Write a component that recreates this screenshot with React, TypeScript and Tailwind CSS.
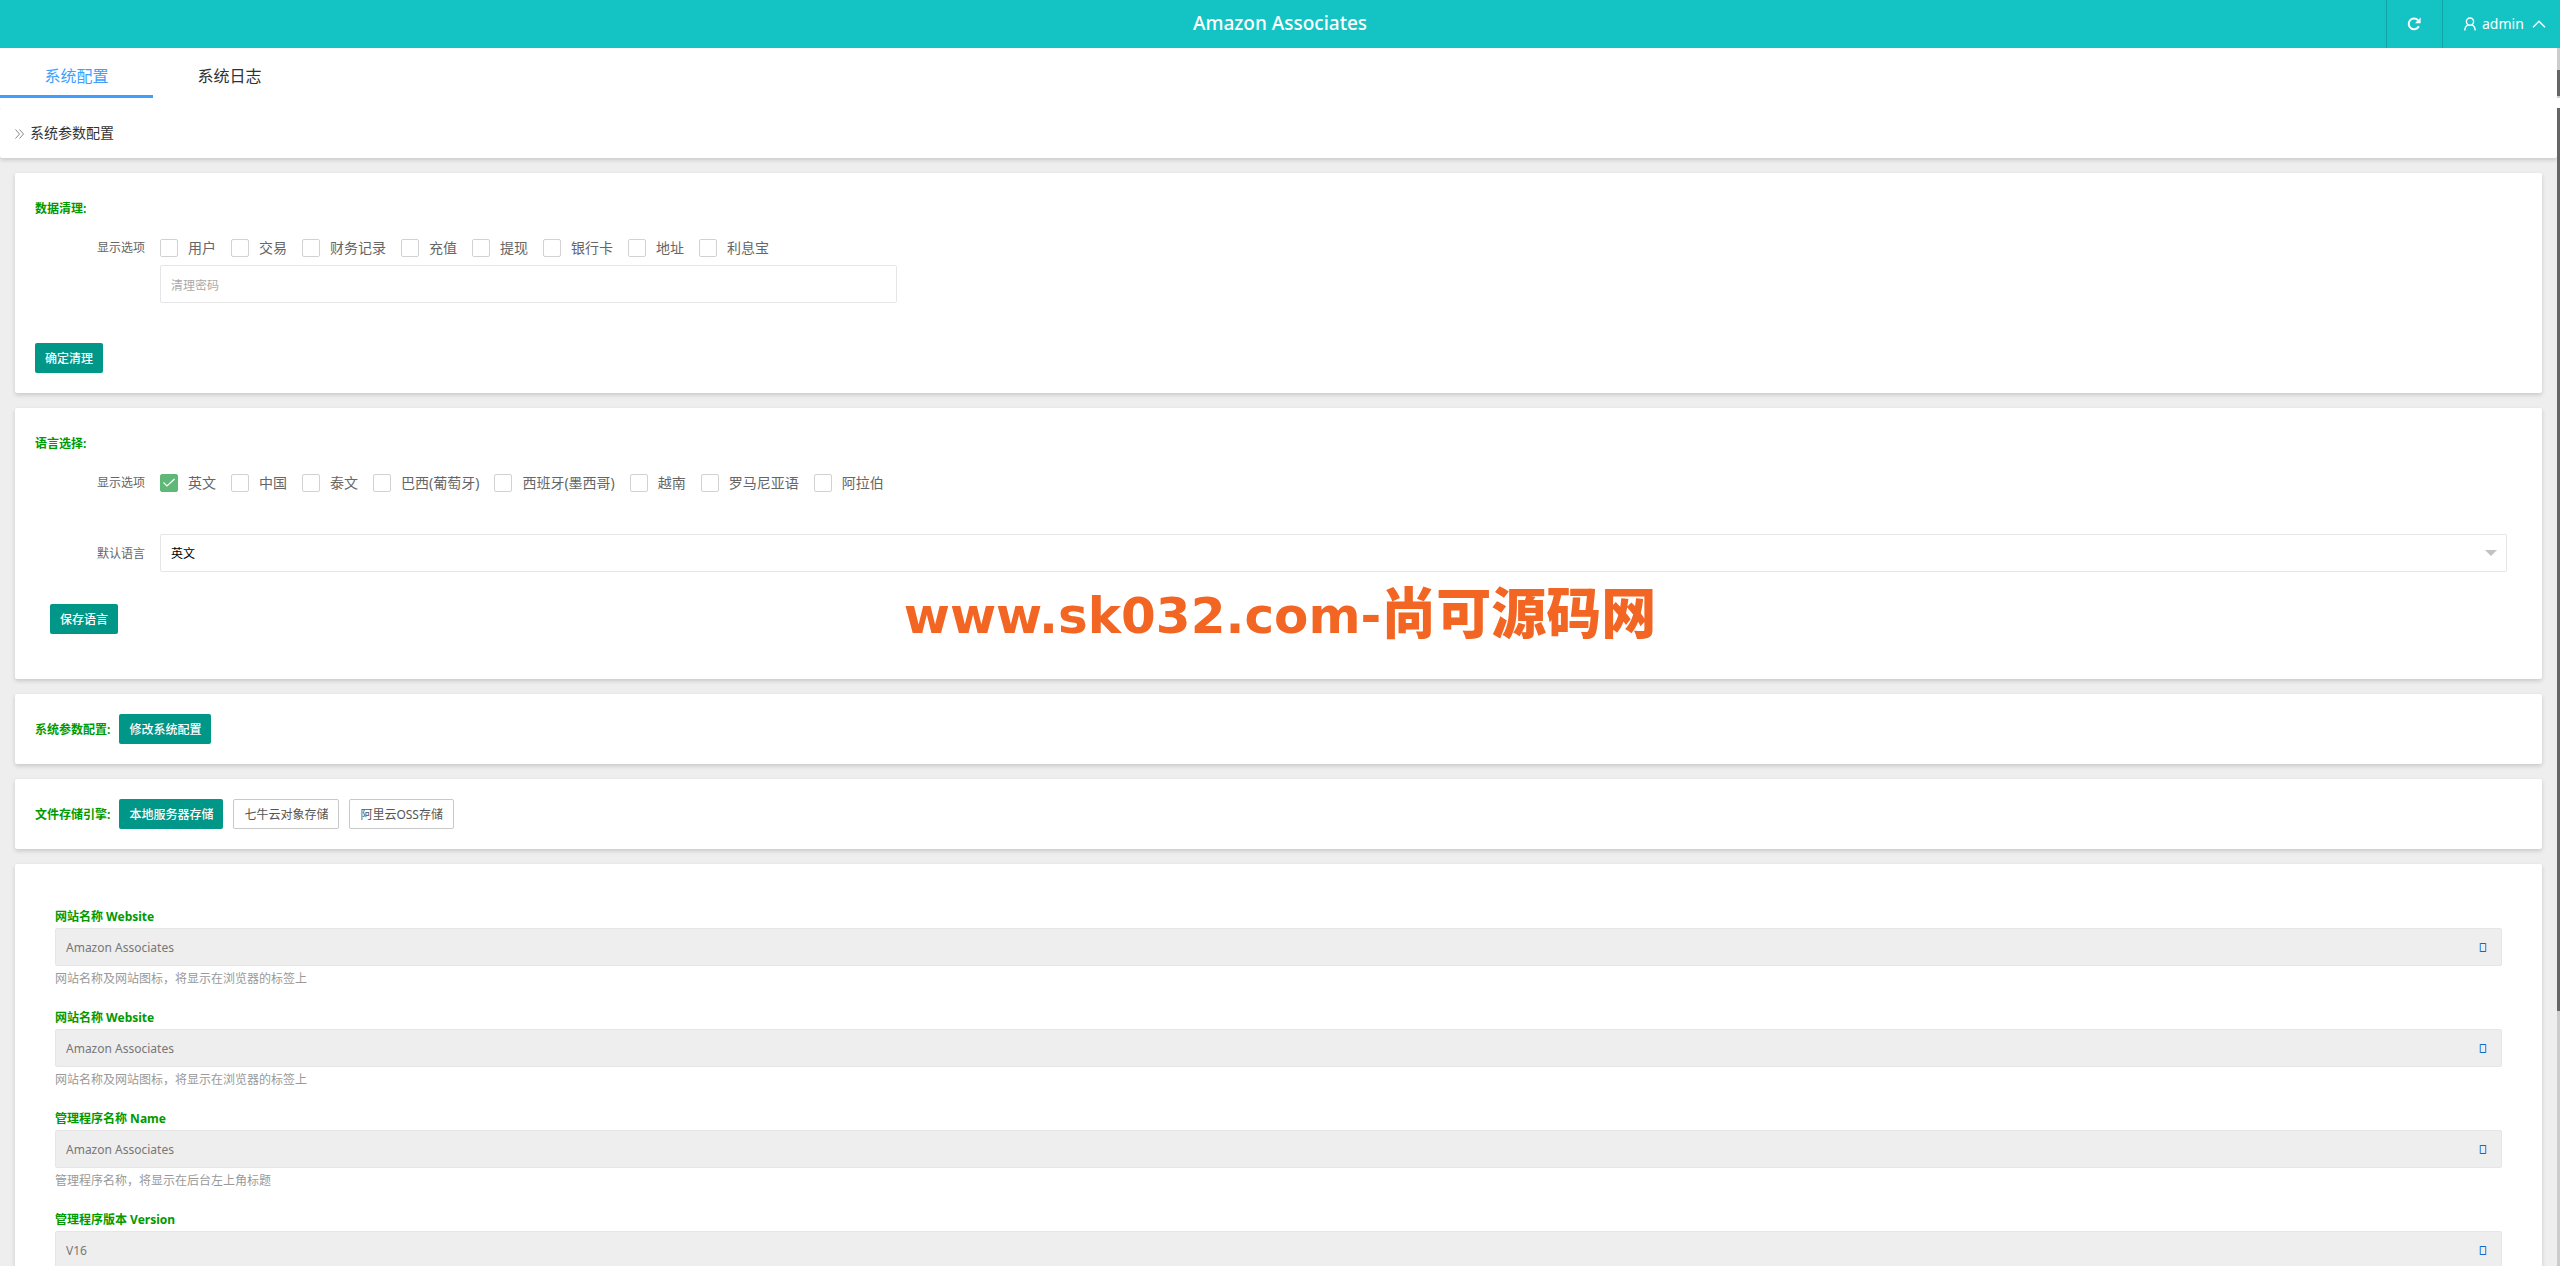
import { useId, useState } from "react";
import type { ReactNode } from "react";

const cleanupOptions = ["用户", "交易", "财务记录", "充值", "提现", "银行卡", "地址", "利息宝"];
const languages = ["英文", "中国", "泰文", "巴西(葡萄牙)", "西班牙(墨西哥)", "越南", "罗马尼亚语", "阿拉伯"];
const settings = [
  { label: "网站名称 Website", value: "Amazon Associates", hint: "网站名称及网站图标，将显示在浏览器的标签上" },
  { label: "网站名称 Website", value: "Amazon Associates", hint: "网站名称及网站图标，将显示在浏览器的标签上" },
  { label: "管理程序名称 Name", value: "Amazon Associates", hint: "管理程序名称，将显示在后台左上角标题" },
  { label: "管理程序版本 Version", value: "V16", hint: "" },
];

function Card({ children, className = "" }: { children: ReactNode; className?: string }) {
  return (
    <section className={`rounded-xs bg-white shadow-[0_2px_4px_rgba(0,0,0,0.16)] ${className}`}>{children}</section>
  );
}

function Title({ children }: { children: ReactNode }) {
  return <h2 className="pt-px text-xs leading-5 font-bold text-[#009900]">{children}</h2>;
}

function Button({ children, outline = false }: { children: ReactNode; outline?: boolean }) {
  return (
    <button
      type="button"
      className={`h-[30px] rounded-xs px-2.5 pt-0.5 text-xs whitespace-nowrap ${
        outline ? "border border-[#c9c9c9] bg-white text-[#555]" : "bg-[#009688] font-medium text-white"
      }`}
    >
      {children}
    </button>
  );
}

function Check({ label, initial = false }: { label: string; initial?: boolean }) {
  const [on, setOn] = useState(initial);
  return (
    <label className="flex items-center gap-2.5 text-sm leading-[18px] whitespace-nowrap text-[#666]">
      <span className="relative size-[18px]">
        <input
          type="checkbox"
          checked={on}
          onChange={() => setOn(!on)}
          className="block size-[18px] appearance-none rounded-xs border border-[#d2d2d2] bg-white checked:border-[#5fb878] checked:bg-[#5fb878]"
        />
        {on && (
          <svg viewBox="0 0 18 18" className="pointer-events-none absolute inset-0" fill="none" stroke="#fff" strokeWidth="1.2">
            <path d="M3.500 8.500 7 12l7.500-7" />
          </svg>
        )}
      </span>
      {label}
    </label>
  );
}

function CheckRow({ items, checked }: { items: string[]; checked?: string }) {
  return (
    <div className="mt-5 flex items-center" role="group" aria-label="显示选项">
      <span className="w-[125px] shrink-0 pr-[15px] text-right text-xs leading-[18px] text-[#666]">显示选项</span>
      <div className="flex flex-wrap gap-x-[15px] gap-y-2">
        {items.map((item) => (
          <Check key={item} label={item} initial={item === checked} />
        ))}
      </div>
    </div>
  );
}

function Setting({ label, value, hint }: { label: string; value: string; hint: string }) {
  const id = useId();
  return (
    <div className="flex h-[101px] flex-col">
      <label htmlFor={id} className="text-xs leading-[22px] font-bold text-[#009900]">
        {label}
      </label>
      <div className="flex h-[38px] shrink-0 items-center rounded-xs border border-[#e6e6e6] bg-[#eee] pr-[15px] pl-2.5">
        <input id={id} readOnly defaultValue={value} className="min-w-0 flex-1 bg-transparent pt-0.5 text-xs text-[#777] outline-none" />
        <a
          href="#copy"
          aria-label={`复制 ${label}`}
          className="h-[9px] w-1.5 border border-x-[#4a96e4] border-y-[#0a66c8] shadow-[1px_0_0_#b9d4ee,-1px_0_0_#b9d4ee]"
        />
      </div>
      {hint && <p className="pt-0.5 text-xs leading-[22px] text-[#999]">{hint}</p>}
    </div>
  );
}

export default function App() {
  return (
    <div className="flex h-screen flex-col overflow-hidden bg-white font-['Noto_Sans','Noto_Sans_CJK_SC',sans-serif] text-[#333]">
      <header className="flex h-12 shrink-0 bg-[#14c4c4] text-white">
        <div className="flex-1" />
        <h1 className="text-[19px] leading-[47px] font-medium">Amazon Associates</h1>
        <div className="flex flex-1 justify-end">
          <button type="button" aria-label="刷新" className="flex w-14 items-center justify-center border-l border-[#0fa5a8] pr-0.5">
            <svg viewBox="0 0 14 14" className="size-3.5" fill="none" stroke="#fff" strokeWidth="2">
              <path d="M11.8 9.2A5.3 5.3 0 1 1 11 3.4" />
              <path d="M13.6.6v5.6H8z" fill="#fff" stroke="none" />
            </svg>
          </button>
          <button type="button" className="flex w-[118px] items-center border-l border-[#0fa5a8] pl-[21px] text-sm">
            <svg viewBox="0 0 12 14" className="h-3.5 w-3" fill="none" stroke="#fff" strokeWidth="1.4">
              <circle cx="6" cy="4.600" r="3.600" />
              <path d="M.8 13.500C.8 10.500 2 8.800 4 7.800M8 7.800c2 1 3.200 2.700 3.200 5.700" />
            </svg>
            <span className="ml-1.5 leading-[46px]">admin</span>
            <svg viewBox="0 0 14 8" className="ml-2 h-2 w-3.5" fill="none" stroke="#fff" strokeWidth="1.4">
              <path d="M1 7.200 7 1.200l6 6" />
            </svg>
          </button>
        </div>
      </header>

      <div className="flex shrink-0">
        <nav className="flex h-[50px] flex-1 text-base leading-[56px]">
          <a href="#config" className="w-[153px] border-b-3 border-[#409eff] text-center text-[#409eff]">
            系统配置
          </a>
          <a href="#log" className="w-[153px] text-center text-[#303133]">
            系统日志
          </a>
        </nav>
        <div className="flex w-[3px] flex-col bg-[#ccc] pt-[22px]">
          <div className="h-[26px] bg-[#666]" />
        </div>
      </div>

      <div className="mt-2.5 flex min-h-0 flex-1">
        <main className="min-w-0 flex-1 overflow-y-auto bg-[#eee] [scrollbar-width:none]">
          <div className="flex h-[50px] items-center gap-1.5 rounded-xs bg-white pl-[15px] text-sm shadow-[0_2px_4px_rgba(0,0,0,0.16)]">
            <svg viewBox="0 0 9 10" className="mt-0.5 h-2.5 w-[9px]" fill="none" stroke="#888">
              <path d="m.5.5 4 4.500-4 4.500M4.500.5l4 4.500-4 4.500" />
            </svg>
            <span>系统参数配置</span>
          </div>

          <div className="flex flex-col gap-[15px] p-[15px]">
            <Card className="px-5 pt-[25px] pb-5">
              <Title>数据清理:</Title>
              <CheckRow items={cleanupOptions} />
              <div className="mt-2 pr-[15px] pl-[125px]">
                <input
                  type="password"
                  placeholder="清理密码"
                  aria-label="清理密码"
                  className="block h-[38px] w-[737px] max-w-full rounded-xs border border-[#e6e6e6] px-2.5 pt-0.5 text-xs placeholder:text-[#aaa]"
                />
              </div>
              <div className="mt-10 flex">
                <Button>确定清理</Button>
              </div>
            </Card>

            <Card className="px-5 pt-[25px] pb-[45px]">
              <Title>语言选择:</Title>
              <CheckRow items={languages} checked="英文" />
              <div className="mt-[42px] flex items-center pr-[15px]">
                <label htmlFor="language" className="w-[125px] shrink-0 pt-0.5 pr-[15px] text-right text-xs text-[#666]">
                  默认语言
                </label>
                <div className="relative flex-1">
                  <select
                    id="language"
                    className="block h-[38px] w-full appearance-none rounded-xs border border-[#e6e6e6] bg-white px-2.5 pt-0.5 text-xs text-black"
                  >
                    {languages.map((l) => (
                      <option key={l}>{l}</option>
                    ))}
                  </select>
                  <span className="pointer-events-none absolute top-4 right-2.5 border-x-6 border-t-6 border-x-transparent border-t-[#c2c2c2]" />
                </div>
              </div>
              <div className="mt-8 flex pl-[15px]">
                <Button>保存语言</Button>
              </div>
            </Card>

            <Card className="flex items-center gap-[9px] p-5">
              <Title>系统参数配置:</Title>
              <Button>修改系统配置</Button>
            </Card>

            <Card className="flex items-center gap-[9px] p-5">
              <Title>文件存储引擎:</Title>
              <div className="flex gap-2.5">
                <Button>本地服务器存储</Button>
                <Button outline>七牛云对象存储</Button>
                <Button outline>阿里云OSS存储</Button>
              </div>
            </Card>

            <Card className="px-10 pt-[42px] pb-10">
              {settings.map((s, i) => (
                <Setting key={i} {...s} />
              ))}
            </Card>
          </div>
        </main>
        <div className="w-[3px] bg-[#ccc]">
          <div className="h-[78%] bg-[#666]" />
        </div>
      </div>

      <div className="pointer-events-none fixed inset-x-0 top-[46%] text-center font-['DejaVu_Sans','Noto_Sans_CJK_SC',sans-serif] text-[50px] leading-[64px] font-black text-[#f26522]">
        www.sk032.com-<span className="text-[55px]">尚可源码网</span>
      </div>
    </div>
  );
}
